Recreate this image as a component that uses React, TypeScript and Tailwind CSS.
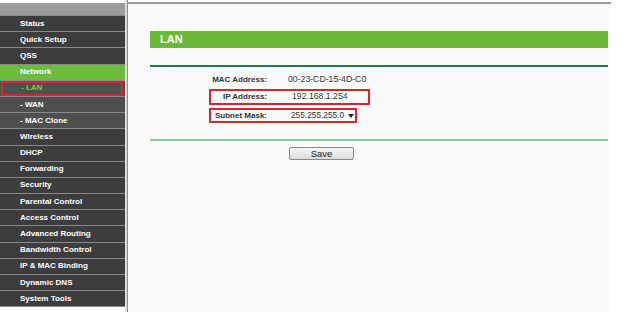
const menu: { label: string; kind: 'main' | 'sub' | 'active' | 'selected' }[] = [
  { label: 'Status', kind: 'main' },
  { label: 'Quick Setup', kind: 'main' },
  { label: 'QSS', kind: 'main' },
  { label: 'Network', kind: 'active' },
  { label: '- LAN', kind: 'selected' },
  { label: '- WAN', kind: 'sub' },
  { label: '- MAC Clone', kind: 'sub' },
  { label: 'Wireless', kind: 'main' },
  { label: 'DHCP', kind: 'main' },
  { label: 'Forwarding', kind: 'main' },
  { label: 'Security', kind: 'main' },
  { label: 'Parental Control', kind: 'main' },
  { label: 'Access Control', kind: 'main' },
  { label: 'Advanced Routing', kind: 'main' },
  { label: 'Bandwidth Control', kind: 'main' },
  { label: 'IP & MAC Binding', kind: 'main' },
  { label: 'Dynamic DNS', kind: 'main' },
  { label: 'System Tools', kind: 'main' },
]

function MenuItem({ label, kind }: { label: string; kind: string }) {
  if (kind === 'active') {
    return (
      <div className="h-[16.2px] bg-[#6cbc3b] border-b border-[#8a8a8a] pl-[20px] flex items-center text-white">
        {label}
      </div>
    )
  }
  if (kind === 'selected') {
    return (
      <div className="h-[16.2px] bg-[#4f4f4f] border-b border-[#8a8a8a] flex items-stretch">
        <div className="flex-1 ml-px mr-[2px] border-2 border-[#e3212b] pl-[18px] flex items-center text-[#8cc63f]">
          {label}
        </div>
      </div>
    )
  }
  return (
    <div
      className={
        kind === 'sub'
          ? 'h-[16.2px] bg-[#4f4f4f] border-b border-[#8a8a8a] pl-[20px] flex items-center text-white'
          : 'h-[16.2px] bg-[#3d3d3d] border-b border-[#8a8a8a] pl-[20px] flex items-center text-white'
      }
    >
      {label}
    </div>
  )
}

export default function App() {
  return (
    <div className="w-[635px] h-[312px] bg-white overflow-hidden flex font-['Liberation_Sans',Arial,sans-serif]">
      <div className="w-[125px] pt-[3px] flex flex-col text-[8px] font-bold">
        <div className="h-[13px] bg-[#9b9b9b] border-b border-[#8a8a8a]" />
        {menu.map((m) => (
          <MenuItem key={m.label} label={m.label} kind={m.kind} />
        ))}
      </div>
      <div className="w-[2px] bg-[#dcdcdc]" />
      <div className="w-px bg-[#8c8c8c]" />
      <div className="w-[483px] mt-[2px] bg-[#fafafa] border-t-2 border-[#9a9a9a] flex flex-col pl-[22px] pr-[3px]">
        <div className="mt-[27px] h-[17px] bg-[#6aba37] flex items-center pl-[10px] text-white font-bold text-[11px]">
          LAN
        </div>
        <div className="mt-[17px] h-[2px] bg-[#1f7d4b]" />
        <div className="pl-[59px] text-[8px] text-[#333]">
          <div className="mt-[7px] h-[12px] flex items-center">
            <span className="w-[58px] shrink-0 text-right font-bold whitespace-nowrap">MAC Address:</span>
            <span className="ml-[21px] shrink-0 text-[8.7px]">00-23-CD-15-4D-C0</span>
          </div>
          <div className="mt-[3px] w-[161px] h-[16px] border-2 border-[#e3212b] flex items-center">
            <span className="w-[56px] shrink-0 text-right font-bold whitespace-nowrap">IP Address:</span>
            <span className="ml-[21px] flex-1 h-full bg-white flex items-center pl-[4px] text-[8.7px]">
              192.168.1.254
            </span>
          </div>
          <div className="mt-[3px] w-[148px] h-[15px] border-2 border-[#e3212b] flex items-center">
            <span className="w-[56px] shrink-0 text-right font-bold whitespace-nowrap">Subnet Mask:</span>
            <span className="ml-[24px] shrink-0 text-[8.3px] whitespace-nowrap">255.255.255.0</span>
            <span className="ml-[4px] shrink-0 w-0 h-0 border-l-[3px] border-r-[3px] border-t-[4px] border-l-transparent border-r-transparent border-t-[#222]" />
          </div>
        </div>
        <div className="mt-[16px] h-[2px] bg-[#8fc4a0]" />
        <div className="mt-[6px] pl-[139px]">
          <button className="w-[65px] h-[13px] border border-[#8a8a8a] rounded-[2px] bg-gradient-to-b from-[#f6f6f6] to-[#dcdcdc] text-[9.5px] text-[#222] flex items-center justify-center leading-none">
            Save
          </button>
        </div>
      </div>
    </div>
  )
}
